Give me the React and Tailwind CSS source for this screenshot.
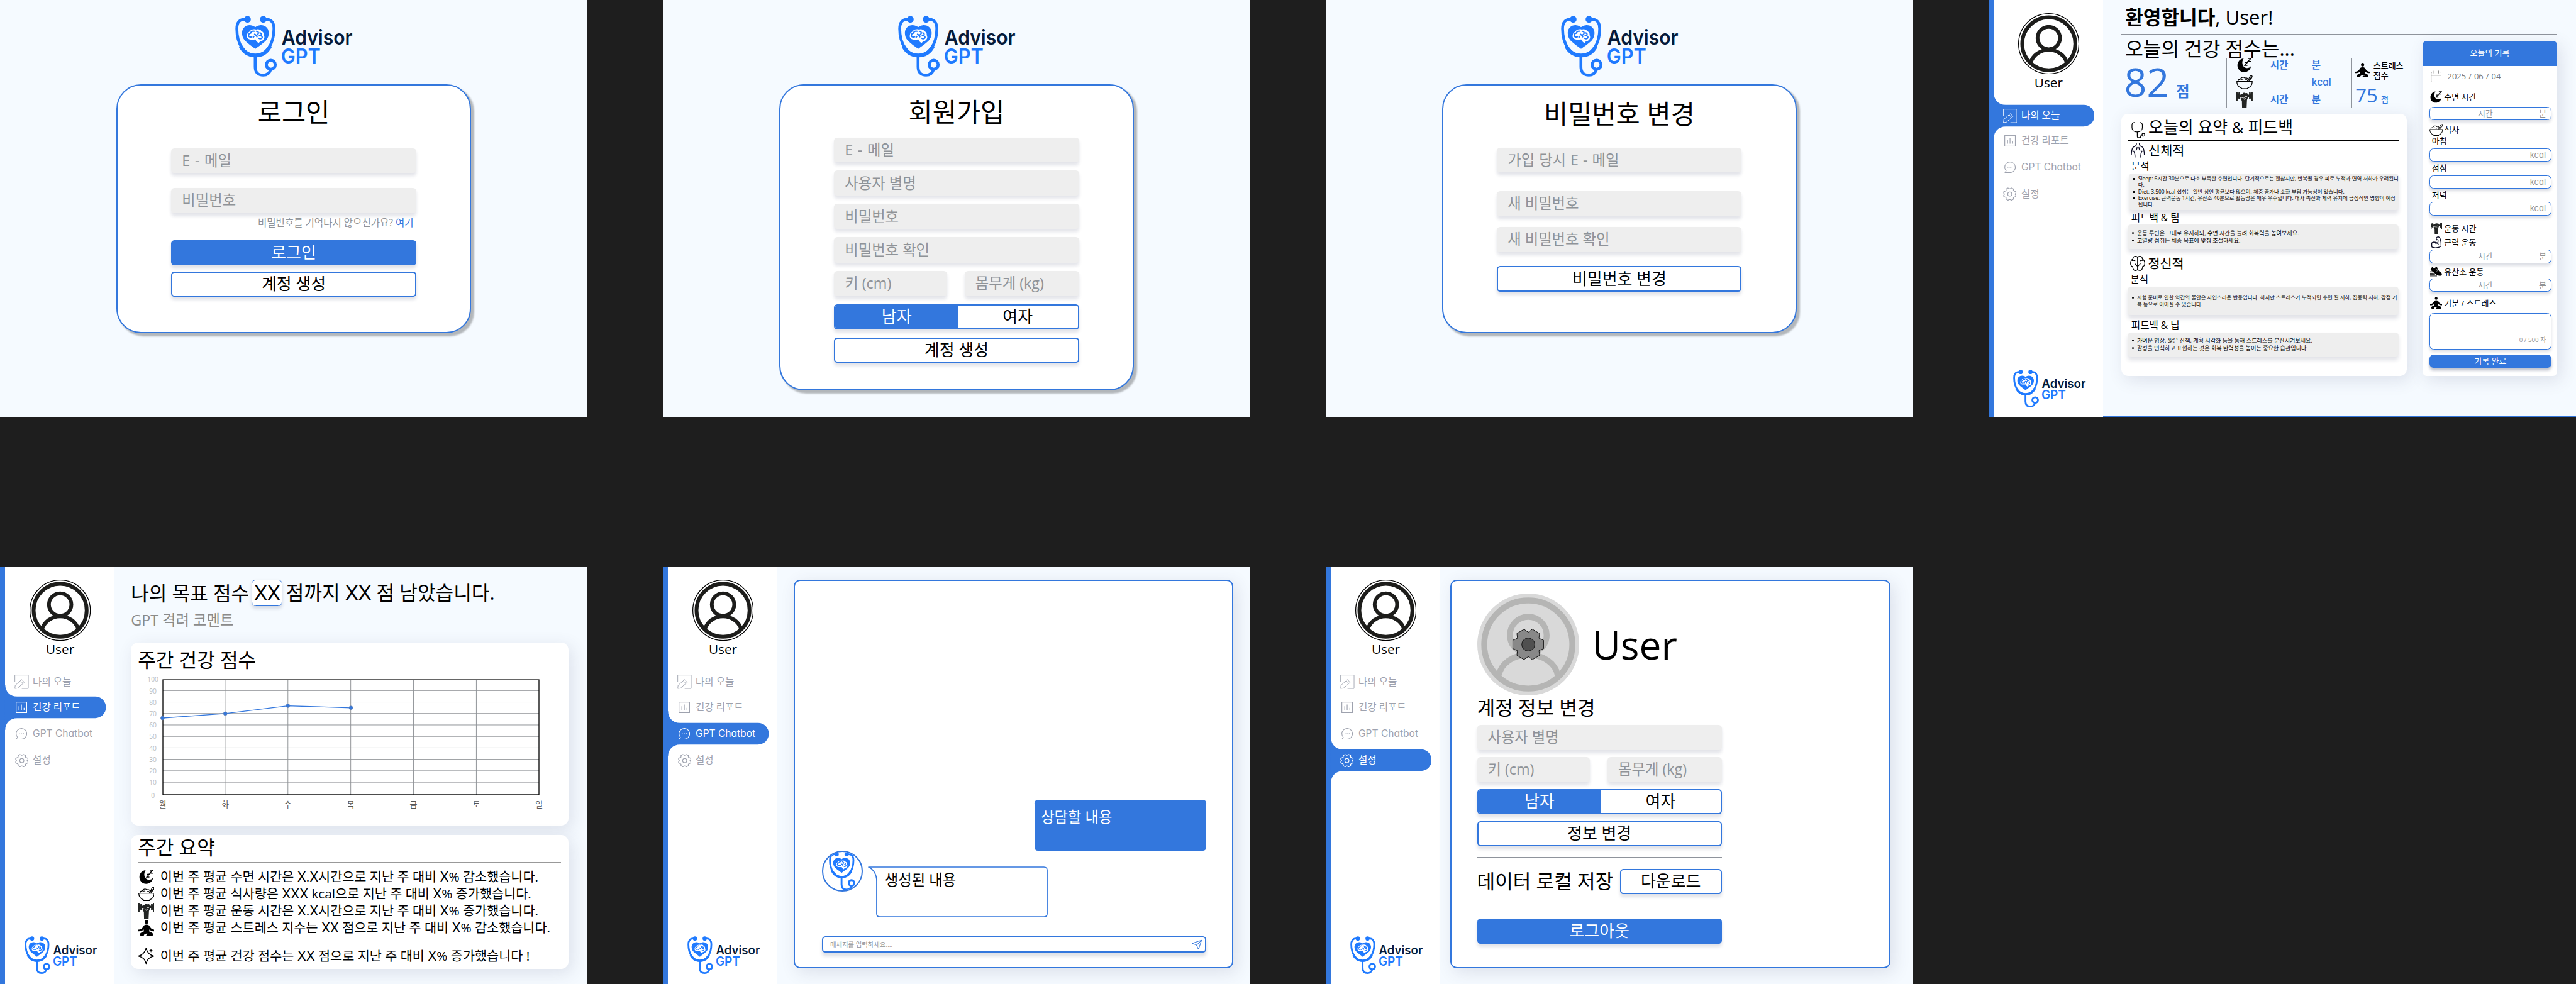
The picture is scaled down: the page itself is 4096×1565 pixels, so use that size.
import React from "react";
import { Send } from "lucide-react";

/* ---------- Brand ---------- */

function LogoMark() {
  return (
    <g>
      <g fill="none" stroke="#1f7aff" strokeLinecap="round">
        <path strokeWidth="21" d="M120 80C80 79 62 105 62 150C62 262 118 346 198 346S335 262 335 150C335 105 317 79 277 80" />
        <path strokeWidth="27" strokeLinecap="butt" d="M88 276C112 322 150 346 198 346S285 322 308 276" />
        <path strokeWidth="21" strokeLinecap="butt" d="M197 350V430C197 470 220 491 256 491C286 491 303 474 311 450" />
        <circle cx="312" cy="414" r="33" strokeWidth="22" />
      </g>
      <g fill="#1f7aff">
        <circle cx="140" cy="80" r="25" />
        <circle cx="256" cy="80" r="25" />
        <path d="M198 297C175 279 145 260 122 237C106 220 100 200 100 180C101 143 128 122 158 123C178 124 191 131 198 138C205 131 218 124 238 123C268 122 296 143 297 180C297 200 291 220 275 237C252 260 221 279 198 297Z" />
      </g>
      <path fill="#fff" d="M199 228C189 229 178 230 165 229C143 228 131 212 137 196C137 184 146 177 153 173C160 157 184 149 203 155C219 149 237 155 243 167C258 173 263 186 260 196C270 212 263 232 247 238C233 240 229 247 222 255C211 247 204 240 199 228Z" />
      <g fill="none" stroke="#1f7aff" strokeWidth="10" strokeLinecap="round">
        <path d="M190 168C176 164 166 171 163 182C150 184 145 193 149 203C152 212 163 213 172 209" />
        <path d="M206 168C220 168 225 180 217 189L206 199L193 190M206 199L210 209M188 206L183 213" />
        <path d="M231 180C241 180 245 190 240 197M228 200C244 199 252 209 247 217C242 225 230 225 225 220" />
      </g>
    </g>
  );
}

function Logo({ className }) {
  return (
    <svg viewBox="50 54 864 449" className={`overflow-visible ${className}`}>
      <LogoMark />
      <g fontFamily="Inter, sans-serif" fontWeight="600" fontSize="151">
        <text x="391" y="267" fill="#061a3a" textLength="522" lengthAdjust="spacingAndGlyphs">Advisor</text>
        <text x="386" y="406" fill="#1f7aff" textLength="292" lengthAdjust="spacingAndGlyphs">GPT</text>
      </g>
    </svg>
  );
}

/* ---------- Icons ---------- */

function AvatarIcon({ className }) {
  return (
    <svg viewBox="0 0 150 150" className={className} fill="none">
      <circle cx="75" cy="75" r="74" fill="#fff" stroke="#000" strokeWidth="2" />
      <g stroke="#1d1d1b" strokeWidth="9.2">
        <circle cx="75" cy="75" r="65" />
        <circle cx="75" cy="61" r="27.5" />
        <path d="M31 121C36 103 54 90 75 90S114 103 119 121" />
      </g>
    </svg>
  );
}

function EditIcon() {
  return (
    <svg viewBox="0 0 35 35" className="w-[35px] h-[35px]" fill="none" stroke="currentColor" strokeWidth="1.4" strokeLinejoin="round">
      <path d="M1 17V1H34V34H18" />
      <path d="M1 34L2 26L18 12L24 19L8 33Z" />
      <path d="M15 15L21 22" />
    </svg>
  );
}

function ChartIcon() {
  return (
    <svg viewBox="0 0 28 28" className="w-[28px] h-[28px]" fill="none" stroke="currentColor" strokeWidth="1.8">
      <rect x="1" y="1" width="26" height="26" />
      <path d="M8 11V21M14 7V21M20.5 15V21" />
    </svg>
  );
}

function ChatIcon() {
  return (
    <svg viewBox="0 0 28 28" className="w-[28px] h-[28px]" fill="none" stroke="currentColor" strokeWidth="1.7" strokeLinejoin="round">
      <path d="M14 1C21.5 1 27 6.7 27 14S21.5 27 14 27H1.5L4.5 22.5C2.3 20 1 17.2 1 14C1 6.7 6.5 1 14 1Z" />
      <g fill="currentColor" stroke="none">
        <circle cx="9" cy="14" r="1.1" />
        <circle cx="14" cy="14" r="1.1" />
        <circle cx="19" cy="14" r="1.1" />
      </g>
    </svg>
  );
}

function GearIcon() {
  return (
    <svg viewBox="0 0 33 33" className="w-[33px] h-[33px]" fill="none" stroke="currentColor" strokeWidth="1.9" strokeLinejoin="round">
      <path d="M12 1.5L16.5 3.5L21 1.5L25.5 4V8L31.5 11V14L29.5 16.500L31.5 19.5V22L25.5 25V29L21 31.500L16.5 29.5L12 31.5L7.5 29V25L1.500 22V19.5L3.5 16.5L1.5 14V11L7.5 8V4Z" />
      <circle cx="16.5" cy="16.5" r="5" />
    </svg>
  );
}

function MoonIcon({ className }) {
  return (
    <svg viewBox="0 0 36 36" className={className}>
      <path d="M16.5 1C8 2 1 9 1 18.5C1 28 8.5 35 17.5 35C26.5 35 33.5 28.5 34.5 20C31 24.5 26 26 21.5 24.5C13 22 10 10 16.5 1Z" />
      <path d="M19 11.5H25L19 18.5H25.5M26.5 1.5H34L26.5 9H34.5" fill="none" stroke="#000" strokeWidth="2.4" />
    </svg>
  );
}

function BowlIcon({ className }) {
  return (
    <svg viewBox="0 0 40 36" className={className} fill="none" stroke="#000" strokeWidth="2" strokeLinejoin="round" strokeLinecap="round">
      <path d="M1 16.5H39C39 25 33.5 31 27.5 32.5L26 34.5H14L12.5 32.5C6.5 31 1 25 1 16.5Z" />
      <path d="M13 34.5H27" strokeWidth="2.6" />
      <path d="M4.5 16C3.5 12.5 6 10.5 9.5 11C11 6.5 17 4 21 8C24 6.5 28 8 29 11.5" />
      <path d="M12 12C13 10.5 15 10.5 16.5 12M21 13C22.5 11 25.5 11 27 13" strokeWidth="1.6" />
      <path d="M27 15L36.5 6.5L39 3.5L36.5 1.5L33.5 3.5L30 10.5M30 16L38 7" strokeWidth="1.7" />
    </svg>
  );
}

function DumbbellIcon({ className }) {
  return (
    <svg viewBox="0 0 40 40" className={className} fill="#232524">
      <path d="M0 0H3V4H5V1.5H9V7H31V1.5H35V4H37V0H40V22H37V16H35V18H31V12.5H9V18H5V16H3V22H0Z" />
      <path d="M11 4.5H16L17.5 2.5H21L22 3.5L25.5 3L28.5 5V14L26 20L25 40H14L13.5 22L10.5 18V14Z" />
      <path d="M12 14L19 15.5L22 11.5H26M19 19L23 16" fill="none" stroke="#fff" strokeWidth="1.2" />
    </svg>
  );
}

function MeditateIcon({ className }) {
  return (
    <svg viewBox="0 0 40 40" className={className}>
      <ellipse cx="20" cy="5" rx="4.3" ry="4.8" />
      <path d="M20 11.5C24 11.5 26 13 28 16.5C30.5 21 34 23.5 40 24V28C34 28 30 26.5 27 23.5L26.5 28L34 32C37 34 36.5 39.5 33 39.5H18L22 35L27 34.5L20 33.5C15 34 13 36.5 13.5 39.5H7C3.5 39.5 3 34 6 32L13.5 28L13 23.5C10 26.5 6 28 0 28V24C6 23.5 9.5 21 12 16.5C14 13 16 11.5 20 11.5Z" />
    </svg>
  );
}

function StethoscopeIcon() {
  return (
    <svg viewBox="0 0 34 40" className="w-[34px] h-[40px]" fill="none" stroke="#000" strokeWidth="1.9" strokeLinecap="round">
      <path d="M7 1.5C3 2 1.5 4 1.5 8V14C1.5 21 7 24.5 14 24.5S27 21 27 14V8C27 4 25 2 21.5 1.5" />
      <path d="M14.5 25V36C14.5 38 15.5 38.5 17 38.5H20C22.5 38.5 23 37 23 35C23 33 24 32 26 32" />
      <circle cx="29.5" cy="31.5" r="3.5" />
    </svg>
  );
}

function BodyIcon() {
  return (
    <svg viewBox="0 0 35 35" className="w-[35px] h-[35px]" fill="none" stroke="#0b0b24" strokeWidth="2.2" strokeLinecap="round">
      <path d="M14 1C14 6 11 7.5 6.5 9C3 11 2 18 1.5 28M21 1C21 6 24 7.5 28.5 9C32 11 33 18 33.5 28" />
      <path d="M7.5 19C10 23 10.5 28 10.5 34M27.5 19C25 23 24.5 28 24.5 34" />
      <path d="M15.5 10C15.5 13 14.5 15 13 17M20 10C20 13 21 15 22.5 17" />
    </svg>
  );
}

function BrainIcon() {
  return (
    <svg viewBox="0 0 37 37" className="w-[37px] h-[37px]" fill="none" stroke="#000" strokeWidth="1.9" strokeLinecap="round" strokeLinejoin="round">
      <path d="M18.5 5C18 2 15.5 1 13 1C9.5 1 7 3.5 7 7.5C2.5 10 1 14 1 18C1 22 3 25.5 6.5 26C6 31 8.5 36 13 36C16 36 18.5 34 18.5 31Z" />
      <path d="M18.5 5C19 2 21.5 1 24 1C27.5 1 30 3.5 30 7.5C34.5 10 36 14 36 18C36 22 34 25.5 30.5 26C31 31 28.5 36 24 36C21 36 18.5 34 18.5 31Z" />
      <path d="M5 11.5C8 10 10 11 12 12M32 11.5C29 10 27 11 25 12M18.5 26L12 19.5M18.5 26L25 19.5" />
    </svg>
  );
}

function CalendarIcon() {
  return (
    <svg viewBox="0 0 27 30" className="w-[27px] h-[30px]" fill="none" stroke="#7a7a7a" strokeWidth="1.6" strokeLinecap="round">
      <rect x="1" y="4" width="25" height="25" rx="2.5" />
      <path d="M1 12H26M8 1V6.5M19 1V6.5" />
    </svg>
  );
}

function ArmIcon() {
  return (
    <svg viewBox="0 0 25 29" className="w-[25px] h-[29px]" fill="none" stroke="#0b0b24" strokeWidth="2.2" strokeLinejoin="round" strokeLinecap="round">
      <path d="M12 5.5C13 2 15 1 17 1C22 2 24 12 24 24C19 28.5 7 29 1.5 26C0.5 22 0.5 19 1.5 15.5C7 12 11 14 15.5 16.5C16.5 14 17 11 16 7.5L13 8.5Z" />
      <path d="M11 17.5C13 15.5 16 16.5 17 19.5" />
    </svg>
  );
}

function ShoeIcon() {
  return (
    <svg viewBox="0 0 29 24" className="w-[29px] h-[24px]">
      <path d="M3 3.5L6 0.5L8.5 3.5C11 4 13 3 14.5 0.5L17 1.5L22 11L28 15.5C29.5 19 29 21.5 27 22.5C19 23.5 15 20 11 16L1 8Z" />
      <path d="M0 12.5H6M0 16H9M0 19.5H12M0 23H17" stroke="#000" strokeWidth="1.4" />
      <path d="M14 9L18 6M16 11.5L20 9" stroke="#fff" strokeWidth="0.9" />
    </svg>
  );
}

function SparkleIcon() {
  return (
    <svg viewBox="0 0 41 41" className="w-[41px] h-[41px]" fill="none" stroke="#000" strokeWidth="2.1" strokeLinejoin="round">
      <path d="M20.5 1.5C23 12 28 18 39.5 21C28 24 23 29 20.5 39.5C18 29 13 24 1.5 21C13 18 18 12 20.5 1.5Z" />
      <path d="M32.5 3.5C33 6 34 7 36.5 7.5C34 8 33 9 32.5 11.5C32 9 31 8 28.5 7.5C31 7 32 6 32.5 3.5Z" fill="#000" strokeWidth="0.6" />
    </svg>
  );
}

/* ---------- Shared text and form controls ---------- */

const latin = "font-['Inter','Noto_Sans_CJK_KR',sans-serif] [font-feature-settings:'cv11']";

/* Sets runs of placeholder X in the wider Latin face. */
function Wide({ children }) {
  return children.split(/(X+)/).map((part, i) =>
    part.startsWith("X") ? (
      <span key={i} className="font-['Inter',sans-serif] tracking-[-0.01em]">
        {part}
      </span>
    ) : (
      part
    )
  );
}

const fieldBase =
  "bg-[#eeeeee] rounded-[8px] pl-[26px] flex items-center text-[36px] text-[#8f9398] leading-none whitespace-nowrap shadow-[0_7px_8px_rgba(30,40,80,0.12)]";

function Field({ children, className = "h-[62px] w-[600px]" }) {
  return <div className={`${fieldBase} ${className}`}>{children}</div>;
}

function Button({ children, primary, className = "h-[62px] w-[600px]" }) {
  return (
    <div
      className={`flex items-center justify-center rounded-[8px] border-[3.1px] border-[#3377dd] text-[40px] leading-none whitespace-nowrap shadow-[0_7px_8px_rgba(30,40,80,0.13)] ${
        primary ? "bg-[#3377dd] text-white" : "bg-white text-black"
      } ${className}`}
    >
      {children}
    </div>
  );
}

function BodyAndGender({ gap }) {
  return (
    <>
      <div className={`flex w-[600px] justify-between ${gap}`}>
        <Field className="h-[62px] w-[277px]">키 (cm)</Field>
        <Field className="h-[62px] w-[280px]">몸무게 (kg)</Field>
      </div>
      <div
        className={`flex h-[62px] w-[600px] overflow-hidden rounded-[8px] border-[3.1px] border-[#3377dd] bg-white text-[40px] leading-none shadow-[0_7px_8px_rgba(30,40,80,0.13)] ${gap}`}
      >
        <div className="flex w-[300px] items-center justify-center bg-[#3377dd] text-white">남자</div>
        <div className="flex flex-1 items-center justify-center">여자</div>
      </div>
    </>
  );
}

/* ---------- Auth screens ---------- */

function AuthScreen({ height, title, titleClass = "mt-[26px]", children }) {
  return (
    <section className="flex h-[1024px] w-[1440px] flex-col items-center bg-[#f5faff]">
      <Logo className="mt-[38px] h-[150px] w-[288px] shrink-0" />
      <div
        className={`mt-[19px] flex w-[869px] flex-col items-center rounded-[60px] border-[3.1px] border-[#3377dd] bg-white shadow-[7px_7px_4px_rgba(0,0,0,0.27)] ${height}`}
      >
        <h1 className={`h-[80px] text-[64px] leading-[80px] ${titleClass}`}>{title}</h1>
        {children}
      </div>
    </section>
  );
}

function LoginScreen() {
  return (
    <AuthScreen height="h-[610px]" title="로그인">
      <Field className="mt-[48px] h-[60px] w-[600px] [word-spacing:2.5px]">E - 메일</Field>
      <Field className="mt-[37px] h-[62px] w-[600px]">비밀번호</Field>
      <p className="mt-[9px] h-[30px] w-[600px] pr-[6px] text-right text-[24px] leading-[30px] text-[#8f9398]">
        비밀번호를 기억나지 않으신가요? <span className="text-[#3377dd]">여기</span>
      </p>
      <Button primary className="mt-[27px] h-[62px] w-[600px]">로그인</Button>
      <Button className="mt-[15px] h-[62px] w-[600px]">계정 생성</Button>
    </AuthScreen>
  );
}

function SignupScreen() {
  return (
    <AuthScreen height="h-[750px]" title="회원가입">
      <Field className="mt-[22px] h-[60px] w-[600px] [word-spacing:2.5px]">E - 메일</Field>
      <Field className="mt-[20px] h-[62px] w-[600px]">사용자 별명</Field>
      <Field className="mt-[20px] h-[62px] w-[600px]">비밀번호</Field>
      <Field className="mt-[20px] h-[62px] w-[600px]">비밀번호 확인</Field>
      <BodyAndGender gap="mt-[20px]" />
      <Button className="mt-[20px] h-[62px] w-[600px]">계정 생성</Button>
    </AuthScreen>
  );
}

function PasswordScreen() {
  return (
    <AuthScreen height="h-[610px]" title="비밀번호 변경" titleClass="mt-[30px]">
      <Field className="mt-[43px] h-[60px] w-[600px] [word-spacing:1.5px]">가입 당시 E - 메일</Field>
      <Field className="mt-[45px] h-[62px] w-[600px]">새 비밀번호</Field>
      <Field className="mt-[26px] h-[62px] w-[600px]">새 비밀번호 확인</Field>
      <Button className="mt-[35px] h-[62px] w-[600px]">비밀번호 변경</Button>
    </AuthScreen>
  );
}

/* ---------- App shell ---------- */

const navItems = [
  { label: "나의 오늘", Icon: EditIcon, gap: "mt-0" },
  { label: "건강 리포트", Icon: ChartIcon, gap: "mt-[9px]" },
  { label: "GPT Chatbot", Icon: ChatIcon, gap: "mt-[12px]", font: latin },
  { label: "설정", Icon: GearIcon, gap: "mt-[12px]" },
];

function Sidebar({ active }) {
  return (
    <aside className="flex h-full w-[281px] shrink-0 flex-col border-l-[12.4px] border-[#3377dd] bg-white">
      <AvatarIcon className="ml-[60px] mt-[32px] h-[150px] w-[150px] shrink-0" />
      <div className="mt-[2px] h-[40px] w-[270px] text-center text-[32px] font-medium leading-[40px]">User</div>
      <nav className="mt-[33px] flex flex-col">
        {navItems.map(({ label, Icon, gap, font }, i) => {
          const on = i === active;
          return (
            <div
              key={label}
              className={`relative flex h-[53px] items-center ${gap} ${on ? "text-white" : "text-[#9ea2ae]"}`}
            >
              {on && (
                <svg viewBox="0 0 249 111" className="absolute -left-[2px] -top-[29px] h-[111px] w-[249px]">
                  <path fill="#3377dd" d="M0 0H2C2 17 14 29 31 29H222.5A26.5 26.5 0 0 1 222.5 82H31C14 82 2 94 2 111H0Z" />
                </svg>
              )}
              <div className="relative ml-[22px] flex w-[37px] justify-center">
                <Icon />
              </div>
              <span className={`relative ml-[9px] whitespace-nowrap text-[24px] leading-none ${font || ""}`}>{label}</span>
            </div>
          );
        })}
      </nav>
      <Logo className="mb-[24px] ml-[48px] mt-auto h-[93px] w-[178px] shrink-0" />
    </aside>
  );
}

function AppScreen({ active, children }) {
  return (
    <section className="flex h-[1024px] w-[1440px] overflow-hidden bg-[#f5faff]">
      <Sidebar active={active} />
      <main className="flex min-w-0 flex-1 flex-col">{children}</main>
    </section>
  );
}

/* ---------- Today ---------- */

const softShadow = "shadow-[8px_10px_40px_rgba(60,60,100,0.13)]";

function Notes({ lines, className, leading }) {
  return (
    <ul className={`rounded-[8px] bg-[#eeeeee] pl-[10px] shadow-[0_8px_10px_rgba(30,40,80,0.13)] ${className}`}>
      {lines.map((rows) => (
        <li key={rows[0]} className={`flex whitespace-nowrap ${leading}`}>
          <span className="mr-[8px] mt-[6px] h-[5px] w-[5px] shrink-0 rounded-full bg-black" />
          <div>
            {rows.map((r) => (
              <div key={r}>{r}</div>
            ))}
          </div>
        </li>
      ))}
    </ul>
  );
}

function TimeInput({ className = "w-[299px]" }) {
  return (
    <div className={`grid h-[33px] grid-cols-[1fr_30px] items-center rounded-[10px] border border-[#3377dd] bg-white pr-[5px] text-center text-[20px] leading-none text-[#8f9398] shadow-[0_6px_7px_rgba(30,40,80,0.15)] ${className}`}>
      <span className="pl-[10px]">시간</span>
      <span>분</span>
    </div>
  );
}

function KcalInput() {
  return (
    <div className={`mt-[4px] flex h-[33px] w-[299px] items-center justify-end rounded-[10px] border border-[#3377dd] bg-white pr-[12px] text-[20px] leading-none text-[#8f9398] shadow-[0_6px_7px_rgba(30,40,80,0.15)] ${latin}`}>
      kcal
    </div>
  );
}

function PanelLabel({ icon, children, className }) {
  return (
    <div className={`flex h-[30px] items-center text-[20px] leading-none ${className}`}>
      <div className="flex w-[33px] justify-center">{icon}</div>
      <span className="ml-[3px]">{children}</span>
    </div>
  );
}

function TodayScreen() {
  return (
    <AppScreen active={0}>
      <div className="flex h-[1020px] w-[1159px] flex-col bg-[#f5faff] pl-[44px]">
        <h1 className="mt-[8px] h-[70px] pl-[10px] text-[48px] leading-[70px]">
          <b className="font-bold">환영합니다</b>, User!
        </h1>
        <div className="mt-[6px] w-[1069px] border-t border-[#8f949c]" />
        <div className="flex">
          <div className="w-[700px]">
            <h2 className="mt-[5px] h-[56px] pl-[10px] text-[48px] leading-[56px]">오늘의 건강 점수는...</h2>
            <div className="-mt-[5px] flex h-[124px] text-[#3377dd]">
              <div className="flex w-[258px] items-baseline pl-[8px] pt-[11px]">
                <span className="text-[96px] leading-[96px]">82</span>
                <span className="ml-[17px] text-[36px] font-semibold leading-none">점</span>
              </div>
              <div className="grid w-[307px] grid-cols-[83px_102px_1fr] grid-rows-[36px_48px_40px] items-center border-l border-[#8f949c] pl-[23px] text-[24px] font-semibold leading-none">
                <MoonIcon className="ml-[2px] h-[36px] w-[36px]" />
                <span>시간</span>
                <span>분</span>
                <BowlIcon className="h-[36px] w-[40px]" />
                <span />
                <span className={`font-medium ${latin}`}>kcal</span>
                <DumbbellIcon className="h-[40px] w-[40px]" />
                <span>시간</span>
                <span>분</span>
              </div>
              <div className="flex flex-1 flex-col border-l border-[#8f949c] pl-[8px] pt-[6px]">
                <div className="flex items-center text-black">
                  <MeditateIcon className="h-[36px] w-[36px]" />
                  <div className="ml-[8px] whitespace-nowrap text-[20px] font-medium leading-[25px]">
                    스트레스
                    <br />
                    점수
                  </div>
                </div>
                <div className="mt-[12px] flex items-baseline">
                  <span className="text-[48px] leading-[48px]">75</span>
                  <span className="ml-[8px] text-[20px] font-medium leading-none">점</span>
                </div>
              </div>
            </div>
            <div className={`mt-[13px] h-[644px] w-[700px] rounded-[16px] bg-white pt-[9px] ${softShadow}`}>
              <div className="flex h-[50px] items-center pl-[25px]">
                <div className="pt-[12px]">
                  <StethoscopeIcon />
                </div>
                <span className="ml-[8px] text-[40px] leading-none">오늘의 요약 &amp; 피드백</span>
              </div>
              <div className="ml-[16px] mt-[7px] w-[664px] border-t border-black" />
              <div className="mt-[3px] flex h-[40px] items-center pl-[24px]">
                <BodyIcon />
                <span className="ml-[8px] text-[32px] leading-none">신체적</span>
              </div>
              <div className="mt-[4px] h-[30px] pl-[25px] text-[24px] leading-[30px]">분석</div>
              <Notes
                className="ml-[19px] mt-[2px] h-[90px] w-[662px] pt-[5px] pl-[8px] text-[13px]"
                leading="leading-[16px]"
                lines={[
                  ["Sleep: 6시간 30분으로 다소 부족한 수면입니다. 단기적으로는 괜찮지만, 반복될 경우 피로 누적과 면역 저하가 우려됩니", "다."],
                  ["Diet: 3,500 kcal 섭취는 일반 성인 평균보다 많으며, 체중 증가나 소화 부담 가능성이 있습니다."],
                  ["Exercise: 근력운동 1시간, 유산소 40분으로 활동량은 매우 우수합니다. 대사 촉진과 체력 유지에 긍정적인 영향이 예상", "됩니다."],
                ]}
              />
              <div className="mt-[4px] h-[30px] pl-[25px] text-[24px] leading-[30px]">피드백 &amp; 팁</div>
              <Notes
                className="ml-[16px] mt-[2px] h-[60px] w-[664px] pt-[12px] text-[14px]"
                leading="leading-[18px]"
                lines={[["운동 루틴은 그대로 유지하되, 수면 시간을 늘려 회복력을 높여보세요."], ["고열량 섭취는 체중 목표에 맞춰 조절하세요."]]}
              />
              <div className="mt-[15px] flex h-[40px] items-center pl-[22px]">
                <BrainIcon />
                <span className="ml-[7px] text-[32px] leading-none">정신적</span>
              </div>
              <div className="mt-[5px] h-[30px] pl-[23px] text-[24px] leading-[30px]">분석</div>
              <Notes
                className="ml-[16px] mt-[2px] h-[70px] w-[664px] pt-[19px] text-[13px]"
                leading="leading-[16px]"
                lines={[
                  ["시험 준비로 인한 약간의 불안은 자연스러운 반응입니다. 하지만 스트레스가 누적되면 수면 질 저하, 집중력 저하, 감정 기", "복 등으로 이어질 수 있습니다."],
                ]}
              />
              <div className="mt-[10px] h-[30px] pl-[25px] text-[24px] leading-[30px]">피드백 &amp; 팁</div>
              <Notes
                className="ml-[16px] mt-[2px] h-[60px] w-[664px] pt-[12px] text-[14px]"
                leading="leading-[18px]"
                lines={[["가벼운 명상, 짧은 산책, 계획 시각화 등을 통해 스트레스를 분산시켜보세요."], ["감정을 인식하고 표현하는 것은 회복 탄력성을 높이는 중요한 습관입니다."]]}
              />
            </div>
          </div>

          <div className={`ml-[39px] mt-[15px] h-[822px] w-[330px] overflow-hidden rounded-[10px] bg-white ${softShadow}`}>
            <div className="flex h-[61px] items-center justify-center bg-[#3377dd] text-[20px] leading-none text-white">오늘의 기록</div>
            <div className="pl-[17px]">
              <div className="flex h-[53px] w-[299px] items-center border-b-2 border-[#8f949c] pl-[3px] text-[20px] leading-none text-[#777777]">
                <CalendarIcon />
                <span className="ml-[14px] whitespace-nowrap [word-spacing:1px]">2025 / 06 / 04</span>
              </div>
              <PanelLabel className="mt-[9px]" icon={<MoonIcon className="h-[29px] w-[29px]" />}>수면 시간</PanelLabel>
              <TimeInput className="mt-[8px] w-[299px]" />
              <PanelLabel className="mt-[9px]" icon={<BowlIcon className="h-[30px] w-[33px]" />}>식사</PanelLabel>
              <div className="h-[26px] pl-[6px] text-[20px] leading-[26px]">아침</div>
              <KcalInput />
              <div className="mt-[3px] h-[26px] pl-[6px] text-[20px] leading-[26px]">점심</div>
              <KcalInput />
              <div className="mt-[3px] h-[26px] pl-[6px] text-[20px] leading-[26px]">저녁</div>
              <KcalInput />
              <PanelLabel className="mt-[17px]" icon={<DumbbellIcon className="h-[28px] w-[28px]" />}>운동 시간</PanelLabel>
              <PanelLabel className="mt-[4px]" icon={<ArmIcon />}>근력 운동</PanelLabel>
              <TimeInput className="mt-[3px] w-[299px]" />
              <PanelLabel className="mt-[6px]" icon={<ShoeIcon />}>유산소 운동</PanelLabel>
              <TimeInput className="mt-[1px] w-[299px]" />
              <PanelLabel className="mt-[13px]" icon={<MeditateIcon className="h-[30px] w-[30px]" />}>기분 / 스트레스</PanelLabel>
              <div className="mt-[9px] flex h-[90px] w-[299px] items-end justify-end rounded-[10px] border border-[#3377dd] pb-[14px] pr-[12px] text-[15px] leading-none text-[#8f9398] shadow-[0_6px_7px_rgba(30,40,80,0.15)]">
                0 / 500 자
              </div>
              <div className="mt-[12px] flex h-[33px] w-[299px] items-center justify-center rounded-[10px] bg-[#3377dd] text-[20px] leading-none text-white shadow-[0_6px_7px_rgba(30,40,80,0.3)]">
                기록 완료
              </div>
            </div>
          </div>
        </div>
      </div>
      <div className="h-[4px] w-full bg-[#3377dd]" />
    </AppScreen>
  );
}

/* ---------- Report ---------- */

const days = ["월", "화", "수", "목", "금", "토", "일"];
const dayX = [36, 189.5, 343.5, 497.5, 651.5, 805.5, 959.5];
const points = [[36, 109.5], [190, 98.5], [343.5, 79.5], [498, 84.5]];

function WeeklyChart() {
  return (
    <svg viewBox="0 0 1000 340" className="ml-[42px] h-[340px] w-[1000px]">
      <g stroke="#8f9296" strokeWidth="1.5">
        {[1, 2, 3, 4, 5, 6, 7, 8, 9].map((i) => (
          <line key={i} x1="37" x2="959" y1={14 + i * 28.1} y2={14 + i * 28.1} />
        ))}
        {dayX.slice(1, 6).map((x) => (
          <line key={x} x1={x} x2={x} y1="16" y2="298" />
        ))}
      </g>
      <rect x="37" y="15.5" width="922" height="282" fill="none" stroke="#000" strokeWidth="2" />
      <polyline points={points.map((p) => p.join(",")).join(" ")} fill="none" stroke="#3377dd" strokeWidth="2" />
      {points.map(([x, y]) => (
        <circle key={x} cx={x} cy={y} r="4.6" fill="#3377dd" stroke="#6f7f99" strokeWidth="0.8" />
      ))}
      <g fontSize="16" fill="#bdbdbd" textAnchor="middle">
        {[100, 90, 80, 70, 60, 50, 40, 30, 20, 10, 0].map((v, i) => (
          <text key={v} x="12.5" y={v === 0 ? 305 : 20.5 + i * 28.1}>{v}</text>
        ))}
      </g>
      <g fontSize="20" fill="#555555" textAnchor="middle">
        {days.map((d, i) => (
          <text key={d} x={dayX[i]} y="328">{d}</text>
        ))}
      </g>
    </svg>
  );
}

function SummaryRow({ icon, children, className = "" }) {
  return (
    <div className={`flex h-[42px] items-center whitespace-nowrap text-[32px] leading-none ${className}`}>
      <div className="flex w-[41px] justify-center">{icon}</div>
      <span className="ml-[14px]">
        <Wide>{children}</Wide>
      </span>
    </div>
  );
}

function ReportScreen() {
  return (
    <AppScreen active={1}>
      <div className="flex w-[1113px] flex-col pl-[40px]">
        <div className="mt-[33px] flex h-[65px] items-center whitespace-nowrap text-[48px] leading-none">
          <span className="w-[296px]">나의 목표 점수</span>
          <span className="flex h-[65px] w-[76px] items-center justify-center rounded-[10px] border border-[#3377dd] bg-white shadow-[0_6px_8px_rgba(30,40,80,0.15)]">
            <Wide>XX</Wide>
          </span>
          <span className="ml-[8px]">
            <Wide>점까지 XX 점 남았습니다.</Wide>
          </span>
        </div>
        <div className="mt-[11px] h-[44px] text-[36px] leading-[44px] text-[#8b8b8b]">GPT 격려 코멘트</div>
        <div className="ml-[4px] mt-[9px] border-t border-[#8f949c]" />
        <div className={`mt-[23px] h-[449px] w-[1073px] rounded-[18px] bg-white pt-[13px] ${softShadow}`}>
          <h2 className="h-[60px] pl-[17px] text-[48px] leading-[60px]">주간 건강 점수</h2>
          <div className="mt-[3px]">
            <WeeklyChart />
          </div>
        </div>
        <div className={`mt-[23px] h-[328px] w-[1073px] rounded-[18px] bg-white pl-[17px] ${softShadow}`}>
          <h2 className="h-[60px] text-[48px] leading-[60px]">주간 요약</h2>
          <div className="mt-[7px] w-[1038px] border-t border-[#999999]" />
          <SummaryRow className="mt-[13px]" icon={<MoonIcon className="h-[36px] w-[36px]" />}>이번 주 평균 수면 시간은 X.X시간으로 지난 주 대비 X% 감소했습니다.</SummaryRow>
          <SummaryRow icon={<BowlIcon className="h-[36px] w-[40px]" />}>이번 주 평균 식사량은 XXX kcal으로 지난 주 대비 X% 증가했습니다.</SummaryRow>
          <SummaryRow icon={<DumbbellIcon className="h-[40px] w-[40px]" />}>이번 주 평균 운동 시간은 X.X시간으로 지난 주 대비 X% 증가했습니다.</SummaryRow>
          <SummaryRow icon={<MeditateIcon className="h-[40px] w-[40px]" />}>이번 주 평균 스트레스 지수는 XX 점으로 지난 주 대비 X% 감소했습니다.</SummaryRow>
          <div className="mt-[15px] w-[1038px] border-t border-[#999999]" />
          <SummaryRow className="mt-[10px]" icon={<SparkleIcon />}>이번 주 평균 건강 점수는 XX 점으로 지난 주 대비 X% 증가했습니다 !</SummaryRow>
        </div>
      </div>
    </AppScreen>
  );
}

/* ---------- Chatbot ---------- */

function ChatScreen() {
  return (
    <AppScreen active={2}>
      <div className={`ml-[40px] mt-[32px] flex h-[954px] w-[1078px] flex-col rounded-[16px] border-[3.1px] border-[#3377dd] bg-white pl-[66px] pr-[64px] ${softShadow}`}>
        <div className="ml-auto mt-[537px] h-[125px] w-[420px] rounded-[8px] bg-[#3377dd] pl-[15px] pt-[18px] text-[36px] leading-[48px] text-white">
          상담할 내용
        </div>
        <div className="flex">
          <div className="flex h-[100px] w-[100px] items-center justify-center overflow-hidden rounded-full border-[3.1px] border-[#3377dd]">
            <svg viewBox="50 54 308 449" className="h-[95px] w-[65px] shrink-0">
              <LogoMark />
            </svg>
          </div>
          <div className="relative ml-[13px] mt-[39px] h-[125px] w-[441px]">
            <svg viewBox="0 0 441 125" className="absolute inset-0 h-[125px] w-[441px]" fill="#fff" stroke="#3377dd" strokeWidth="2.6" strokeLinejoin="round">
              <path d="M1.5 1.5H431.5Q439.5 1.5 439.5 9.5V115.5Q439.5 123.5 431.5 123.5H29.5Q21.5 123.5 21.5 115.5V36C21.5 20 14 7 1.5 1.5Z" />
            </svg>
            <div className="relative pl-[41px] pt-[9px] text-[36px] leading-[48px]">생성된 내용</div>
          </div>
        </div>
        <div className="mt-[46px] flex h-[40px] w-[942px] items-center justify-between rounded-[8px] border-[3.1px] border-[#3377dd] bg-white pl-[17px] pr-[7px] text-[16px] leading-none text-[#8f9398] shadow-[0_8px_8px_rgba(30,40,80,0.14)]">
          메세지를 입력하세요....
          <Send className="h-[26px] w-[26px] text-[#3377dd]" strokeWidth={1.5} />
        </div>
      </div>
    </AppScreen>
  );
}

/* ---------- Settings ---------- */

function EditableAvatar() {
  return (
    <svg viewBox="0 0 250 250" className="h-[250px] w-[250px] shrink-0" fill="none">
      <circle cx="125" cy="125" r="125" fill="#d9d9d9" />
      <g stroke="#b5b5b4" strokeWidth="14.5">
        <circle cx="125" cy="125" r="108" />
        <circle cx="125" cy="102" r="45" />
        <path d="M53 200C58 172 88 150 125 150S192 172 197 200" />
      </g>
      <path fill="#888888" stroke="#111" strokeWidth="1.5" d="M114.5 87.5L125 95L135 87.5L153 98L151 109.5L162.5 114.5V135L151 140L153 151.5L135 162L125 154.5L114.5 162L97 151.5L98.5 140L87 135V114.5L98.5 109.5L97 98Z" />
      <circle cx="125" cy="125" r="16" fill="#505050" stroke="#111" strokeWidth="1.5" />
    </svg>
  );
}

function SettingsScreen() {
  return (
    <AppScreen active={3}>
      <div className={`ml-[25px] mt-[32px] flex h-[954px] w-[1078px] flex-col rounded-[16px] border-[3.1px] border-[#3377dd] bg-white pl-[62px] ${softShadow}`}>
        <div className="mt-[31px] flex items-center">
          <EditableAvatar />
          <span className="ml-[32px] mt-[2px] text-[96px] font-medium leading-none">User</span>
        </div>
        <h2 className="h-[60px] text-[48px] leading-[60px]">계정 정보 변경</h2>
        <Field className="mt-[12px] h-[62px] w-[600px]">사용자 별명</Field>
        <BodyAndGender gap="mt-[17px]" />
        <Button className="mt-[17px] h-[62px] w-[600px]">정보 변경</Button>
        <div className="mt-[25px] w-[600px] border-t-2 border-[#8f949c]" />
        <div className="mt-[28px] flex w-[600px] items-center justify-between whitespace-nowrap">
          <span className="text-[48px] leading-none">데이터 로컬 저장</span>
          <Button className="h-[62px] w-[250px]">다운로드</Button>
        </div>
        <Button primary className="mt-[60px] h-[62px] w-[600px]">로그아웃</Button>
      </div>
    </AppScreen>
  );
}

export default function App() {
  return (
    <div className="h-screen w-screen overflow-hidden bg-[#1e1e1e]">
      <div className="grid w-[6315px] grid-cols-[repeat(4,1440px)] gap-x-[185px] gap-y-[365px] text-black [zoom:0.6486] font-['Open_Sans','Noto_Sans_CJK_KR',sans-serif]">
        <LoginScreen />
        <SignupScreen />
        <PasswordScreen />
        <TodayScreen />
        <ReportScreen />
        <ChatScreen />
        <SettingsScreen />
      </div>
    </div>
  );
}
